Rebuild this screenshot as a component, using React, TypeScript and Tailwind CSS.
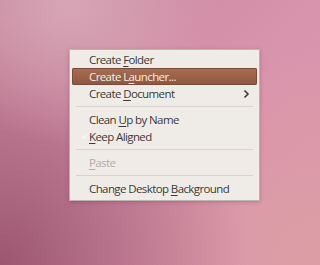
import React from "react";

type Item =
  | { kind: "sep" }
  | {
      kind: "item";
      pre: string;
      key: string;
      post: string;
      active?: boolean;
      disabled?: boolean;
      checked?: boolean;
      submenu?: boolean;
    };

const items: Item[] = [
  { kind: "item", pre: "Create ", key: "F", post: "older" },
  { kind: "item", pre: "Create L", key: "a", post: "uncher...", active: true },
  { kind: "item", pre: "Create ", key: "D", post: "ocument", submenu: true },
  { kind: "sep" },
  { kind: "item", pre: "Clean ", key: "U", post: "p by Name" },
  { kind: "item", pre: "", key: "K", post: "eep Aligned", checked: true },
  { kind: "sep" },
  { kind: "item", pre: "", key: "P", post: "aste", disabled: true },
  { kind: "sep" },
  { kind: "item", pre: "Change Desktop ", key: "B", post: "ackground" },
];

export default function App() {
  return (
    <div className="relative h-[265px] w-[320px] overflow-hidden bg-[radial-gradient(circle_at_22%_0%,#d6a6b6_0%,transparent_40%),radial-gradient(circle_at_0%_100%,#9c5670_0%,transparent_60%),radial-gradient(circle_at_100%_100%,#dc9ea4_0%,transparent_55%),linear-gradient(135deg,#c8869c_0%,#d893ad_55%,#dc98b0_100%)] font-['Open_Sans',sans-serif]">
      <div className="absolute left-[69px] top-[49px] w-[191px] border border-[#bdb4ab] bg-[#efebe6] pt-[1px] pb-[3px] shadow-[0_1px_4px_rgba(80,20,40,0.25)]">
        {items.map((it, i) =>
          it.kind === "sep" ? (
            <div key={i} className="flex h-[9px] items-center px-[6px]">
              <div className="h-px w-full bg-[#d9d3cc]" />
            </div>
          ) : (
            <div
              key={i}
              className={
                "relative mx-[2px] flex h-[17px] items-center rounded-[2px] pl-[17px] pr-[6px] text-[11.5px] tracking-[-0.6px] leading-none " +
                (it.active
                  ? "bg-[linear-gradient(#a86e52,#8e563f)] text-[#f4ece6] shadow-[inset_0_0_0_1px_#7d4a36]"
                  : it.disabled
                    ? "text-[#b3aca4]"
                    : "text-[#3c3b37]")
              }
            >
              {it.checked && (
                <span className="absolute left-[9px] top-[3px] text-[10px] text-[#fdfcfb]">✓</span>
              )}
              <span className="flex-1 whitespace-nowrap">
                {it.pre}
                <span className="underline underline-offset-[2px]">{it.key}</span>
                {it.post}
              </span>
              {it.submenu && (
                <svg width="7" height="10" viewBox="0 0 7 10" className="mr-[1px]">
                  <path d="M1.5 1.5 L5 5 L1.5 8.5" fill="none" stroke="#3c3b37" strokeWidth="1.6" />
                </svg>
              )}
            </div>
          )
        )}
      </div>
    </div>
  );
}
